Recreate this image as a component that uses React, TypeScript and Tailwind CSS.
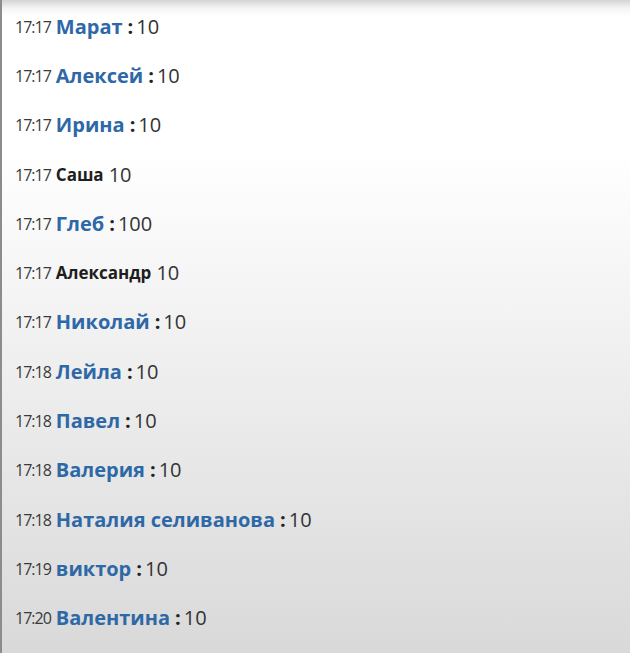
const rows: { t: string; name: string; v: string; plain?: boolean }[] = [
  { t: "17:17", name: "Марат", v: "10" },
  { t: "17:17", name: "Алексей", v: "10" },
  { t: "17:17", name: "Ирина", v: "10" },
  { t: "17:17", name: "Саша", v: "10", plain: true },
  { t: "17:17", name: "Глеб", v: "100" },
  { t: "17:17", name: "Александр", v: "10", plain: true },
  { t: "17:17", name: "Николай", v: "10" },
  { t: "17:18", name: "Лейла", v: "10" },
  { t: "17:18", name: "Павел", v: "10" },
  { t: "17:18", name: "Валерия", v: "10" },
  { t: "17:18", name: "Наталия селиванова", v: "10" },
  { t: "17:19", name: "виктор", v: "10" },
  { t: "17:20", name: "Валентина", v: "10" },
];

export default function App() {
  return (
    <div className="h-[653px] w-[630px] overflow-hidden border-l-2 border-[#8c8c8c] bg-[linear-gradient(to_bottom,#d3d3d3_0px,#f4f4f4_8px,#ffffff_16px,#ffffff_150px,#d9d9d9_100%)] pt-[2px] font-['Open_Sans',sans-serif]">
      {rows.map((r, i) => (
        <div key={i} className="flex h-[49.3px] items-center whitespace-pre pl-[13px] text-[#333]">
          <span className="mr-[5px] text-[16px] tracking-[-1px] text-[#3a3a3a]">{r.t}</span>
          {r.plain ? (
            <>
              <span className="text-[17px] font-bold text-[#1e1e1e]">{r.name}</span>
              <span className="ml-[5px] text-[20px] text-[#333]">{r.v}</span>
            </>
          ) : (
            <>
              <span className="text-[20px] font-bold text-[#2e68a6]">{r.name}</span>
              <span className="ml-[5px] text-[20px] font-bold text-[#222]">:</span>
              <span className="ml-[3px] text-[20px] text-[#333]">{r.v}</span>
            </>
          )}
        </div>
      ))}
    </div>
  );
}
